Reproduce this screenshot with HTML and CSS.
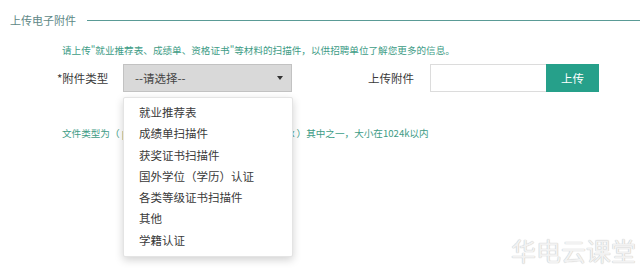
FILE: index.html
```html
<!DOCTYPE html>
<html lang="zh">
<head>
    <meta charset="utf-8">
    <title>上传电子附件</title>
    <link rel="stylesheet" href="styles.css">
</head>
<body>
    <div class="panel">
        <div class="legend">
            <span class="legend-text">上传电子附件</span>
            <i class="rule"></i>
        </div>

        <p class="tip">请上传"就业推荐表、成绩单、资格证书"等材料的扫描件，以供招聘单位了解您更多的信息。</p>

        <div class="form-row">
            <label class="label">*附件类型</label>
            <div class="select-wrap">
                <div class="select">
                    <span>--请选择--</span>
                    <i class="caret"></i>
                </div>
                <!-- opened list of the select -->
                <ul class="options">
                    <li>就业推荐表</li>
                    <li>成绩单扫描件</li>
                    <li>获奖证书扫描件</li>
                    <li>国外学位（学历）认证</li>
                    <li>各类等级证书扫描件</li>
                    <li>其他</li>
                    <li>学籍认证</li>
                </ul>
            </div>
            <label class="label upload-label">上传附件</label>
            <div class="upload">
                <input class="file-name" type="text">
                <button class="upload-btn">上传</button>
            </div>
        </div>

        <p class="tip file-types">文件类型为（ pdf、jpg、jpeg、doc、docx、xls、xlsx ）其中之一，大小在1024k以内</p>
    </div>

    <div class="watermark">华电云课堂</div>
</body>
</html>
```

FILE: styles.css
```css
body {
    margin: 0;
    background-color: #ffffff;
    font-family: "Noto Sans CJK SC", "Noto Sans", sans-serif;
    color: #333333;
}

.panel {
    position: relative;
    width: 640px;
    height: 270px;
    overflow: hidden;
}

.legend {
    display: flex;
    align-items: center;
    margin-top: 12px;
    padding-left: 10px;
    height: 16px;
}

.legend-text {
    font-size: 11px;
    line-height: 16px;
    color: #5e8886;
}

.rule {
    flex: 1;
    height: 1px;
    margin-left: 11px;
    background-color: #5a9b96;
}

.tip {
    margin: 15px 0 0 0;
    padding-left: 62px;
    font-size: 9.6px;
    line-height: 14px;
    color: #3e9c86;
    white-space: nowrap;
}

.form-row {
    display: flex;
    align-items: center;
    margin-top: 7px;
    padding-left: 57px;
    height: 28px;
}

.label {
    width: 66px;
    font-size: 11.5px;
    color: #3a3a3a;
}

.select-wrap {
    position: relative;
    width: 169px;
    height: 28px;
}

.select {
    display: flex;
    align-items: center;
    justify-content: space-between;
    box-sizing: border-box;
    height: 28px;
    padding: 0 8px 0 11px;
    background-color: #d9d9d9;
    border: 1px solid #c2c2c2;
    font-size: 11.5px;
    color: #444444;
}

.caret {
    width: 0;
    height: 0;
    border-left: 3px solid transparent;
    border-right: 3px solid transparent;
    border-top: 4px solid #333333;
}

.options {
    position: absolute;
    top: 33px;
    left: 0;
    width: 168px;
    margin: 0;
    padding: 4px 0 5px 0;
    list-style: none;
    background-color: #ffffff;
    border: 1px solid #e4e4e4;
    border-radius: 2px;
    box-shadow: 0 3px 8px rgba(0, 0, 0, 0.18);
    z-index: 2;
}

.options li {
    padding-left: 15px;
    font-size: 11.5px;
    line-height: 21.3px;
    color: #3a3a3a;
}

.upload-label {
    width: auto;
    margin-left: 76px;
    margin-right: 16px;
}

.upload {
    display: flex;
    height: 28px;
}

.file-name {
    box-sizing: border-box;
    width: 116px;
    height: 28px;
    margin: 0;
    border: 1px solid #dcdcdc;
    border-right: none;
    outline: none;
}

.upload-btn {
    width: 53px;
    height: 28px;
    border: none;
    background-color: #26a08a;
    color: #ffffff;
    font-family: inherit;
    font-size: 11.5px;
}

.file-types {
    margin-top: 34px;
}

.watermark {
    position: absolute;
    right: 4px;
    bottom: 6px;
    font-size: 25px;
    line-height: 28px;
    color: #f2f2f2;
    text-shadow: 0 0 1px #c8c8c8, 0 0 1px #c8c8c8;
}
```
